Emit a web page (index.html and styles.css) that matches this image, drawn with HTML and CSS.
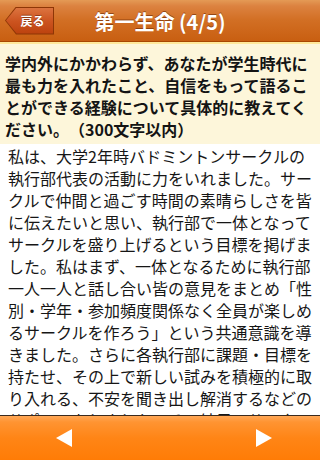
FILE: index.html
```html
<!DOCTYPE html>
<html lang="ja">
<head>
<meta charset="utf-8">
<link rel="stylesheet" href="styles.css">
</head>
<body>
<div class="app">
  <header class="navbar">
    <div class="back-outer"><div class="back-inner">戻る</div></div>
    <h1 class="title">第一生命 (4/5)</h1>
  </header>
  <section class="question">学内外にかかわらず、あなたが学生時代に最も力を入れたこと、自信をもって語ることができる経験について具体的に教えてください。（300文字以内）</section>
  <section class="answer">私は、大学2年時バドミントンサークルの執行部代表の活動に力をいれました。サークルで仲間と過ごす時間の素晴らしさを皆に伝えたいと思い、執行部で一体となってサークルを盛り上げるという目標を掲げました。私はまず、一体となるために執行部一人一人と話し合い皆の意見をまとめ「性別・学年・参加頻度関係なく全員が楽しめるサークルを作ろう」という共通意識を導きました。さらに各執行部に課題・目標を持たせ、その上で新しい試みを積極的に取り入れる、不安を聞き出し解消するなどのサポートをしました。その結果、サークル全体の一体感が高まりました。</section>
  <footer class="toolbar">
    <svg class="arrow" width="18" height="20" viewBox="0 0 18 20"><polygon points="1,10 17,1 17,19" fill="#fff"/></svg>
    <svg class="arrow" width="18" height="20" viewBox="0 0 18 20"><polygon points="17,10 1,1 1,19" fill="#fff"/></svg>
  </footer>
</div>
</body>
</html>
```
FILE: styles.css
```css
* { box-sizing: border-box; margin: 0; padding: 0; }
html, body { width: 320px; height: 460px; overflow: hidden; background: #fff; }
body {
  font-family: "Noto Sans CJK JP", "Noto Sans", sans-serif;
  color: #1a1a1a;
  text-spacing-trim: space-all;
}
.app { display: flex; flex-direction: column; height: 460px; }
.navbar {
  height: 44px;
  flex: none;
  display: flex;
  align-items: center;
  padding: 0 0 0 5px;
  background: linear-gradient(#e49a55 0px, #dc8240 6px, #d26f24 20px, #c85e10 42px);
  border-bottom: 2px solid #ffe89a;
  box-shadow: inset 0 -1px 0 #a84600;
}
.back-outer {
  width: 49px; height: 28px;
  margin-top: -1px;
  padding: 1px;
  background: #8e3606;
  clip-path: polygon(0 50%, 11px 0, 100% 0, 100% 100%, 11px 100%);
  flex: none;
}
.back-inner {
  width: 100%; height: 100%;
  background: linear-gradient(#dc7440 0%, #cc5420 50%, #bc420e 100%);
  clip-path: polygon(0 50%, 10.5px 0, 100% 0, 100% 100%, 10.5px 100%);
  color: #fff;
  font-size: 12px;
  font-weight: 700;
  display: flex; align-items: center; justify-content: center;
  padding-left: 6px;
  text-shadow: 0 -1px 0 rgba(80,20,0,0.5);
}
.title {
  flex: 1;
  text-align: center;
  color: #fff;
  font-size: 20px;
  font-weight: 700;
  margin-left: -2px;
  margin-right: 52px;
  text-shadow: 0 -1px 0 rgba(90,30,0,0.55);
}
.question {
  flex: none;
  background: #fdf6da;
  font-weight: 700;
  font-size: 16px;
  line-height: 22px;
  padding: 8px 8px 4px 5px;
  color: #141414;
}
.answer {
  flex: 1;
  overflow: hidden;
  font-size: 16px;
  line-height: 22px;
  padding: 1px 7px 0 8px;
  color: #161616;
}
.toolbar {
  height: 45px;
  flex: none;
  border-top: 1px solid #3a2a1e;
  background: linear-gradient(#ffa858 0px, #ff9432 6px, #ff8516 22px, #ff7c06 44px);
  display: flex;
  align-items: center;
  justify-content: space-between;
  padding: 0 47px 0 55px;
}
.arrow { display: block; }
```
